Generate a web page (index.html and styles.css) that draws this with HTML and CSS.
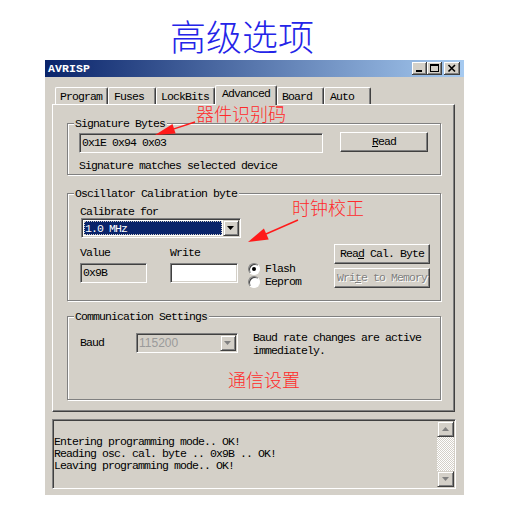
FILE: index.html
```html
<!DOCTYPE html>
<html>
<head>
<meta charset="utf-8">
<title>AVRISP 高级选项</title>
<link rel="stylesheet" href="styles.css">
</head>
<body>
<h1 class="page-title">高级选项</h1>

<div class="window">
  <div class="titlebar">
    <span class="caption">AVRISP</span>
    <div class="caption-btns">
      <span class="cbtn"><svg width="15" height="13" viewBox="0 0 15 13"><rect x="4" y="8" width="6" height="2" fill="#000"/></svg></span>
      <span class="cbtn"><svg width="15" height="13" viewBox="0 0 15 13"><rect x="3.5" y="2.5" width="8" height="7" fill="none" stroke="#000"/><rect x="3" y="2" width="9" height="2" fill="#000"/></svg></span>
      <span class="cbtn cbtn-close"><svg width="16" height="13" viewBox="0 0 16 13"><path d="M4.5 3 L11 9.5 M11 3 L4.5 9.5" stroke="#000" stroke-width="1.6"/></svg></span>
    </div>
  </div>

  <div class="client">
    <div class="tabs">
      <div class="tab w-program">Program</div>
      <div class="tab w-fuses">Fuses</div>
      <div class="tab w-lockbits">LockBits</div>
      <div class="tab tab-active w-advanced">Advanced</div>
      <div class="tab w-board">Board</div>
      <div class="tab w-auto">Auto</div>
    </div>

    <div class="panel">
      <div class="group group-sig">
        <div class="legend">Signature Bytes</div>
        <div class="sig-row">
          <div class="field sig-field">0x1E 0x94 0x03</div>
          <div class="btn read-btn"><u>R</u>ead</div>
        </div>
        <div class="sig-status">Signature matches selected device</div>
      </div>

      <div class="group group-osc">
        <div class="legend">Oscillator Calibration byte</div>
        <div class="cal-label">Calibrate for</div>
        <div class="combo cal-combo">
          <div class="combo-sel">1.0 MHz</div>
          <div class="combo-btn"><svg width="8" height="4" viewBox="0 0 8 4"><path d="M0 0 H7 L3.5 4 Z" fill="#000"/></svg></div>
        </div>
        <div class="osc-row">
          <div class="col col-value">
            <div class="col-label">Value</div>
            <div class="field value-field">0x9B</div>
          </div>
          <div class="col col-write">
            <div class="col-label">Write</div>
            <div class="field write-field"></div>
          </div>
          <div class="col col-radios">
            <div class="radio-row"><span class="radio"><span class="dot"></span></span><span class="radio-label">Flash</span></div>
            <div class="radio-row"><span class="radio"></span><span class="radio-label">Eeprom</span></div>
          </div>
          <div class="col col-btns">
            <div class="btn">Rea<u>d</u> Cal. Byte</div>
            <div class="btn btn-disabled">Wri<u>t</u>e to Memory</div>
          </div>
        </div>
      </div>

      <div class="group group-comm">
        <div class="legend">Communication Settings</div>
        <div class="comm-row">
          <div class="baud-label">Baud</div>
          <div class="combo baud-combo">
            <div class="baud-value">115200</div>
            <div class="combo-btn"><svg width="8" height="4" viewBox="0 0 8 4"><path d="M0 0 H7 L3.5 4 Z" fill="#808080"/></svg></div>
          </div>
          <div class="baud-note">Baud rate changes are active<br>immediately.</div>
        </div>
        <div class="note-comm">通信设置</div>
      </div>
    </div>

    <div class="log">
      <div class="log-text">Entering programming mode.. OK!<br>Reading osc. cal. byte .. 0x9B .. OK!<br>Leaving programming mode.. OK!</div>
      <div class="scrollbar">
        <div class="sb-btn"><svg width="7" height="4" viewBox="0 0 7 4"><path d="M3.5 0 L7 4 H0 Z" fill="#808080"/></svg></div>
        <div class="sb-track"></div>
        <div class="sb-btn"><svg width="7" height="4" viewBox="0 0 7 4"><path d="M0 0 H7 L3.5 4 Z" fill="#808080"/></svg></div>
      </div>
    </div>
  </div>
</div>

<div class="note note-sig">器件识别码</div>
<div class="note note-osc">时钟校正</div>
<svg class="arrows" width="505" height="505" viewBox="0 0 505 505">
  <line x1="195" y1="122" x2="174" y2="128.8" stroke="#ff1a1a" stroke-width="1.4"/>
  <polygon points="155,135 172.5,124 175.6,133.6" fill="#ff1a1a"/>
  <line x1="298" y1="220" x2="266" y2="234" stroke="#ff1a1a" stroke-width="1.4"/>
  <polygon points="248,242 263.9,228.4 268.7,239.4" fill="#ff1a1a"/>
</svg>
</body>
</html>
```

FILE: styles.css
```css
* { box-sizing: border-box; }

body {
  margin: 0;
  width: 505px;
  height: 505px;
  overflow: hidden;
  position: relative;
  background: #fff;
  color: #000;
  font-family: "Liberation Mono", monospace;
  font-size: 11.5px;
  letter-spacing: -0.9px;
  line-height: 12px;
}

.page-title {
  margin: 0;
  height: 60px;
  padding: 10px 0 0 170px;
  font: 300 36px/50px "Noto Sans CJK SC", sans-serif;
  letter-spacing: 0;
  color: #2424e8;
}

.window {
  margin-left: 45px;
  width: 419px;
  height: 435px;
  background: #d4d0c8;
}

.titlebar {
  height: 17px;
  display: flex;
  justify-content: space-between;
  background: linear-gradient(to right, #0a246a, #a6caf0);
}

.caption {
  padding-left: 3px;
  color: #fff;
  font-weight: bold;
  letter-spacing: 0.1px;
  line-height: 17px;
}

.caption-btns {
  display: flex;
  padding: 2px 4px 0 0;
}

.cbtn {
  width: 15px;
  height: 13px;
  display: flex;
  background: #d4d0c8;
  box-shadow: inset -1px -1px #404040, inset 1px 1px #fff, inset -2px -2px #808080;
}

.cbtn-close {
  width: 16px;
  margin-left: 2px;
}

.client {
  padding: 8px 0 0 7px;
}

.tabs {
  display: flex;
  align-items: flex-end;
  height: 19px;
  padding-left: 3px;
}

.tab {
  height: 17px;
  padding: 3px 0 0 4px;
  background: #d4d0c8;
  border-top: 1px solid #fff;
  border-left: 1px solid #fff;
  border-right: 1px solid #404040;
  border-radius: 2px 2px 0 0;
  box-shadow: inset -1px 0 #808080;
  line-height: 12px;
}

.tab-active {
  height: 20px;
  margin-bottom: -1px;
  padding: 2px 0 0 6px;
}

.w-program { width: 53px; }
.w-fuses { width: 48px; padding-left: 5px; }
.w-lockbits { width: 59px; }
.w-advanced { width: 62px; }
.w-board { width: 47px; }
.w-auto { width: 47px; padding-left: 5px; }

.panel {
  width: 403px;
  height: 308px;
  padding: 18px 13px 0 14px;
  border: 1px solid;
  border-color: #fff #404040 #404040 #fff;
  box-shadow: inset -1px -1px #808080;
  display: flex;
  flex-direction: column;
}

.group {
  border: 1px solid #808080;
  box-shadow: inset 1px 1px #fff, 1px 1px #fff;
}

.group-sig { height: 52px; }
.group-osc { height: 108px; margin-top: 18px; }
.group-comm { height: 84px; margin-top: 15px; }

.legend {
  width: fit-content;
  height: 12px;
  margin: -6px 0 0 6px;
  padding: 0 2px 0 1px;
  background: #d4d0c8;
}

.field {
  height: 20px;
  padding-left: 2px;
  line-height: 18px;
  background: #d4d0c8;
  border: 1px solid;
  border-color: #808080 #fff #fff #808080;
  box-shadow: inset 1px 1px #404040, inset -1px -1px #d4d0c8;
}

.btn {
  height: 20px;
  text-align: center;
  line-height: 18px;
  background: #d4d0c8;
  border: 1px solid;
  border-color: #fff #404040 #404040 #fff;
  box-shadow: inset -1px -1px #808080;
}

.btn-disabled {
  color: #808080;
  text-shadow: 1px 1px #fff;
}

.sig-row {
  display: flex;
  align-items: flex-start;
  margin: 3px 0 0 11px;
}

.sig-field { width: 244px; }

.read-btn {
  width: 88px;
  margin: -1px 0 0 17px;
}

.sig-status { margin: 7px 0 0 11px; }

.cal-label { margin: 6px 0 0 12px; }

.combo {
  display: flex;
  height: 20px;
  padding: 2px;
  background: #fff;
  border: 1px solid;
  border-color: #808080 #fff #fff #808080;
  box-shadow: inset 1px 1px #404040, inset -1px -1px #d4d0c8;
}

.cal-combo {
  width: 160px;
  margin-left: 13px;
}

.combo-sel {
  flex: 1;
  margin: 0 1px 0 0;
  padding-left: 1px;
  line-height: 15px;
  color: #fff;
  background: #0a246a;
  outline: 1px dotted #d4d0c8;
  outline-offset: -1px;
}

.combo-btn {
  width: 16px;
  height: 16px;
  margin: -1px -1px 0 0;
  display: flex;
  align-items: center;
  justify-content: center;
  background: #d4d0c8;
  border: 1px solid;
  border-color: #d4d0c8 #404040 #404040 #d4d0c8;
  box-shadow: inset 1px 1px #fff, inset -1px -1px #808080;
}

.osc-row {
  display: flex;
  margin: 6px 0 0 12px;
}

.col-label { margin-top: 3px; }
.col-value { width: 67px; }
.col-value .field { margin-top: 4px; }
.col-write { width: 68px; margin-left: 23px; }
.write-field { margin-top: 4px; background: #fff; }

.col-radios {
  width: 86px;
  margin: 18px 0 0 10px;
}

.radio-row {
  display: flex;
  align-items: center;
  height: 13px;
}

.radio {
  width: 12px;
  height: 12px;
  display: flex;
  align-items: center;
  justify-content: center;
  border-radius: 50%;
  background: #fff;
  border: 1px solid;
  border-color: #808080 #fff #fff #808080;
  box-shadow: inset 1px 1px #404040;
}

.dot {
  width: 4px;
  height: 4px;
  border-radius: 50%;
  background: #000;
}

.radio-label { margin-left: 5px; }

.col-btns {
  width: 96px;
  display: flex;
  flex-direction: column;
  gap: 4px;
}

.comm-row {
  display: flex;
  margin: 10px 0 0 12px;
}

.baud-label {
  width: 56px;
  line-height: 20px;
}

.baud-combo {
  width: 102px;
  background: #d4d0c8;
}

.baud-value {
  flex: 1;
  font-family: "Liberation Sans", sans-serif;
  font-size: 12px;
  letter-spacing: 0;
  line-height: 15px;
  color: #9a9a9a;
}

.baud-note { margin: -1px 0 0 15px; line-height: 12.5px; }

.note-comm {
  margin: 12px 0 0 160px;
  font: 300 18px/20px "Noto Sans CJK SC", sans-serif;
  letter-spacing: 0;
  color: #ff2a2a;
}

.log {
  display: flex;
  width: 404px;
  height: 70px;
  margin-top: 7px;
  border: 1px solid;
  border-color: #808080 #fff #fff #808080;
  box-shadow: inset 1px 1px #404040, inset -1px -1px #d4d0c8;
  padding: 1px;
}

.log-text {
  flex: 1;
  padding-top: 15px;
}

.scrollbar {
  width: 17px;
  display: flex;
  flex-direction: column;
}

.sb-btn {
  height: 16px;
  display: flex;
  align-items: center;
  justify-content: center;
  background: #d4d0c8;
  border: 1px solid;
  border-color: #d4d0c8 #404040 #404040 #d4d0c8;
  box-shadow: inset 1px 1px #fff, inset -1px -1px #808080;
}

.sb-track {
  flex: 1;
  background: repeating-conic-gradient(#fff 0 25%, #d4d0c8 0 50%) 0 0 / 2px 2px;
}

.note {
  position: absolute;
  font: 300 18px/20px "Noto Sans CJK SC", sans-serif;
  letter-spacing: 0;
  color: #ff2a2a;
}

.note-sig { left: 196px; top: 103px; }
.note-osc { left: 292px; top: 197px; }

.arrows {
  position: absolute;
  left: 0;
  top: 0;
  pointer-events: none;
}
```
